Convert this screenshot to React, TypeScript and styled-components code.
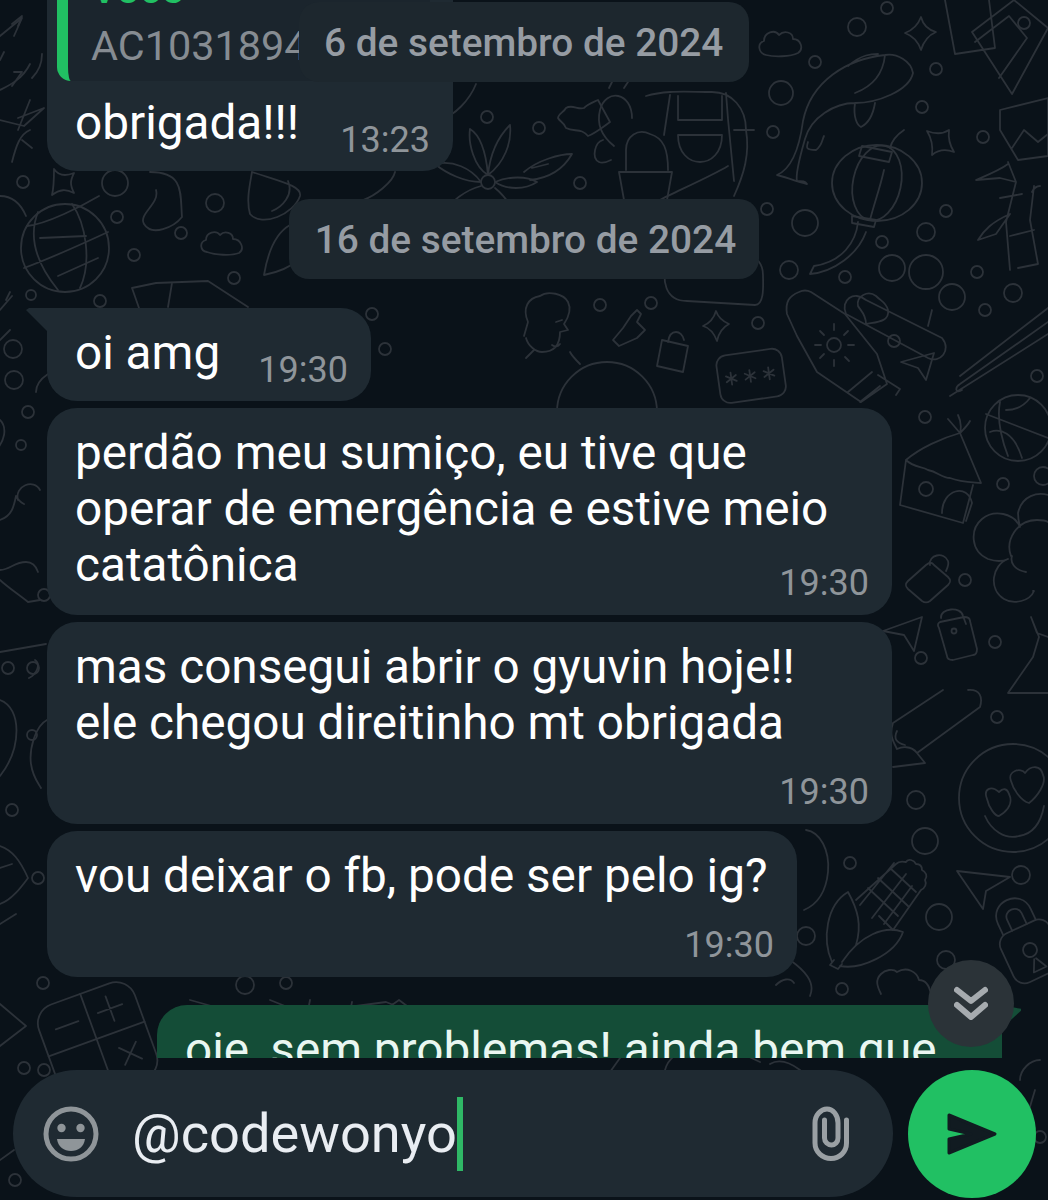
import React from "react";
import styled, { createGlobalStyle } from "styled-components";

const Global = createGlobalStyle`
  html, body { margin: 0; padding: 0; background: #0a1219; }
  * { box-sizing: border-box; }
`;

const Screen = styled.div`
  position: relative;
  width: 1048px;
  height: 1200px;
  overflow: hidden;
  display: flex;
  flex-direction: column;
  background: #0a1219;
  font-family: Roboto, "Liberation Sans", sans-serif;
`;

const WallpaperSvg = styled.svg`
  position: absolute;
  inset: 0;
  fill: none;
  stroke: #2c3239;
  stroke-width: 1.8;
  stroke-linecap: round;
  stroke-linejoin: round;
`;

const Feed = styled.div`
  position: relative;
  height: 1058px;
  overflow: hidden;
  display: flex;
  flex-direction: column;
`;

const FeedInner = styled.div`
  margin-top: -43px;
  display: flex;
  flex-direction: column;
  gap: 7px;
  flex: none;
`;

const Bubble = styled.div<{ $w: number }>`
  position: relative;
  width: ${(p) => p.$w}px;
  margin-left: 47px;
  padding: 17px 23px 10px 28px;
  background: #1f2a32;
  border-radius: 30px;
  color: #fff;
  font-size: 47.7px;
  line-height: 56px;
`;

const TailBubble = styled(Bubble)`
  border-top-left-radius: 0;
  &::before {
    content: "";
    position: absolute;
    left: -21px;
    top: 0;
    width: 22px;
    height: 24px;
    background: #1f2a32;
    clip-path: polygon(0 2px, 3px 0, 100% 0, 100% 100%);
  }
`;

const ReplyBubble = styled(Bubble)`
  padding: 10px 23px 20px 10px;
`;

const Quote = styled.div`
  height: 114px;
  overflow: hidden;
  background: #1b252d;
  border-left: 11px solid #21c063;
  border-radius: 14px;
  border-top-left-radius: 0;
  padding: 0 0 0 23px;
  margin-bottom: 14px;
`;

const QuoteAuthor = styled.div`
  color: #21c063;
  font-size: 41px;
  font-weight: 500;
  line-height: 44px;
  margin-top: 0;
`;

const QuoteText = styled.div`
  color: #868c92;
  font-size: 41.4px;
  line-height: 44px;
  margin-top: 13px;
  white-space: nowrap;
`;

const InlineRow = styled.div<{ $pad?: number }>`
  display: flex;
  align-items: flex-end;
  justify-content: space-between;
  padding-left: ${(p) => p.$pad ?? 0}px;
`;

const Time = styled.div<{ $top?: number; $drop?: number }>`
  font-size: 36px;
  line-height: 44px;
  color: #8f959a;
  text-align: right;
  margin-top: ${(p) => p.$top ?? 0}px;
  margin-bottom: ${(p) => -(p.$drop ?? 0)}px;
  white-space: nowrap;
`;

const Line = styled.div`
  white-space: nowrap;
`;

const InlineBubble = styled(TailBubble)`
  padding-bottom: 20px;
`;

const DateChip = styled.div`
  align-self: center;
  height: 80px;
  padding: 0 23px 0 26px;
  display: flex;
  align-items: center;
  background: #1d272e;
  border-radius: 20px;
  color: #969ca3;
  font-size: 38.8px;
  font-weight: 500;
  white-space: nowrap;
`;

const DateInFlow = styled(DateChip)`
  margin: 21px 0 22px;
`;

const StickyDate = styled(DateChip)`
  position: absolute;
  top: 2px;
  left: 299px;
  z-index: 3;
  padding: 0 26px 0 25px;
`;

const OutBubble = styled.div`
  position: relative;
  width: 845px;
  margin: 21px 0 0 157px;
  height: 120px;
  padding: 17px 28px;
  background: #144d37;
  border-radius: 30px;
  border-top-right-radius: 0;
  color: #e9f7f1;
  font-size: 47.7px;
  line-height: 56px;
  white-space: nowrap;
  &::after {
    content: "";
    position: absolute;
    right: -19px;
    top: 0;
    width: 20px;
    height: 24px;
    background: #144d37;
    clip-path: polygon(0 0, 100% 16%, 100% 24%, 0 100%);
  }
`;

const ScrollButton = styled.button`
  position: absolute;
  left: 928px;
  top: 960px;
  z-index: 4;
  width: 86px;
  height: 87px;
  border: 0;
  padding: 0;
  border-radius: 50%;
  background: #2b3338;
  display: flex;
  align-items: center;
  justify-content: center;
`;

const Footer = styled.div`
  position: relative;
  display: flex;
  gap: 15px;
  padding: 12px 12px 0 13px;
`;

const InputBar = styled.div`
  flex: none;
  width: 880px;
  height: 127px;
  padding: 0 44px 0 30px;
  border-radius: 64px;
  background: #1f2a32;
  display: flex;
  align-items: center;
`;

const Typed = styled.div`
  flex: 1;
  margin-left: 33px;
  display: flex;
  align-items: center;
  color: #e9edf2;
  font-size: 54.2px;
  line-height: 56px;
`;

const Caret = styled.span`
  display: inline-block;
  width: 6px;
  height: 74px;
  background: #2fb866;
`;

const SendButton = styled.button`
  flex: none;
  width: 128px;
  height: 128px;
  border: 0;
  padding: 0;
  border-radius: 50%;
  background: #21c063;
  display: flex;
  align-items: center;
  justify-content: center;
`;

const Wallpaper = () => {
  const small: [number, number, number][] = [
    [857, 27, 9], [815, 62, 6], [781, 93, 12], [936, 69, 6], [887, 8, 6], [922, 107, 6], [773, 132, 6],
    [767, 209, 6], [805, 223, 13], [946, 211, 6], [926, 232, 9], [882, 242, 6], [789, 270, 9], [845, 277, 6],
    [892, 268, 13], [926, 272, 17], [952, 297, 13], [1013, 293, 9], [977, 272, 6], [985, 310, 6], [983, 137, 6],
    [1024, 23, 6], [894, 341, 6], [758, 323, 6], [651, 303, 6], [600, 305, 6], [1037, 376, 6], [580, 183, 6],
    [539, 128, 6], [215, 203, 9], [115, 183, 13], [23, 182, 6], [117, 217, 6], [181, 233, 6], [134, 255, 6],
    [234, 278, 6], [487, 117, 6], [925, 417, 6], [1003, 484, 6], [965, 580, 6], [995, 642, 6], [921, 658, 6],
    [997, 717, 6], [916, 800, 9], [925, 841, 13], [850, 863, 6], [1021, 875, 9], [939, 917, 13], [946, 960, 9],
    [842, 989, 6], [806, 936, 9], [31, 295, 5], [100, 301, 6], [13, 349, 9], [28, 412, 6], [21, 445, 5],
    [14, 380, 9], [44, 595, 6], [33, 668, 6], [8, 668, 6], [32, 735, 5], [12, 810, 6], [38, 878, 6],
    [44, 1070, 6], [24, 1068, 6], [15, 1180, 6], [43, 983, 6], [245, 985, 9], [286, 983, 6], [1040, 1137, 6],
    [1043, 476, 9], [372, 314, 6], [385, 349, 6],
  ];
  return (
    <WallpaperSvg width="1048" height="1200" viewBox="0 0 1048 1200" aria-hidden="true">
      {small.map(([x, y, r], i) => (
        <circle key={i} cx={x} cy={y} r={r} />
      ))}
      {/* globe */}
      <circle cx="65" cy="248" r="44" />
      <path d="M27 226c20-2 55-20 72-30M24 268c22-8 58-24 84-36M38 212c-8 20-6 46 20 78M72 204c14 20 20 58 8 84M40 238l46-2M58 276l40-18" />
      {/* small clouds */}
      <path d="M207 252c-7-1-8-10-1-12 0-8 10-10 14-5 5-5 13-2 13 4 8 0 12 10 6 14-8 3-24 2-32-1z" />
      <path d="M766 55c-8-2-9-12-2-14 0-9 11-12 15-6 5-5 14-3 14 4 8 0 11 10 5 14-8 4-24 4-32 2z" />
      {/* stars */}
      <path d="M54 169c4 6 10 8 20 4-4 8-4 12 0 20-8-4-14-4-22 2 2-8 2-18 2-26z" />
      <path d="M921 17c2 8 8 13 15 15-7 3-12 8-15 18-3-9-8-14-16-17 8-3 13-8 16-16z" />
      <path d="M927 131c8 3 16 3 22-1-1 8 0 14 5 22-8-3-16-2-22 3 1-8 0-16-5-24z" />
      <path d="M716 311c2 6 6 10 13 13-6 3-10 8-12 17-3-8-7-13-14-15 7-3 11-8 13-15z" />
      {/* flower */}
      <circle cx="488" cy="182" r="7" />
      <path d="M488 175c-14-8-20-32-18-46 10 6 16 24 18 46zM488 175c2-20 10-38 22-50 2 18-6 38-22 50zM481 182c-16 0-34-8-46-18 18-4 36 4 46 18zM495 182c14-6 32-6 42 0-12 8-30 8-42 0zM481 186c-16 4-30 16-38 26M495 188c10 8 16 18 20 26" />
      {/* socks shapes */}
      <path d="M150 172c35 0 30 22 32 45-8 10-30 20-38 7-6-10 16-20 12-34M252 172c30 10 50 14 48 24-6 18-38 32-50 18-4-14 0-30 2-42M288 181c6 14-6 26-16 30" />
      <path d="M360 200c-14 6-30 12-40 24M395 172c-2 10-20 24-32 28M132 288l24-5 52-2 40 26M132 288l7 20M172 283l-4 24" />
      <path d="M290 225c-14 8-22 26-26 50 10-2 24-6 32-14" />
      {/* cactus man */}
      <path d="M626 170v-20c0-14 12-22 24-16 14 4 18 16 18 36M619 172h53l-5 28h-43zM632 118c0-26-26-30-32-8-4 16 4 28 14 36M609 88l3-6M624 88l4-6M603 140c-8 2-12 18-4 22 4 2 8 0 12-2" />
      <path d="M646 96c20-6 40-4 66-4 20 0 34 16 34 38 4 24-2 44-12 66M670 95l-6 40M726 93l2 26 6 62M678 96v24h44V96M678 135c0 36 44 36 44 0zM660 200c10-6 48-22 68-34M734 130h20" />
      {/* puzzle */}
      <path d="M566 108c6-4 12 2 18 0 4-4 10-6 14-8l12 22c-8 6-16 12-22 14-6-8-14-4-22-8-2-6-6-6-8-10 0-4 6-6 8-10z" />
      <path d="M524 172c14-12 36-18 48-18-8 14-22 24-42 26M532 168l16-4" />
      {/* fish */}
      <path d="M777 175c14-6 22-24 26-54 8-40 44-62 82-66 12-2 26 6 28 18-4 18-36 30-58 30-20 0-44 14-50 36-4 14-10 34-8 42 6 0 8 0 10 3-10-2-24-8-30-9zM848 66c14-12 24-12 30-12M885 55c-2 20-14 32-30 38M855 103c-2 14 2 22 6 24 8-4 12-12 14-24M808 142c-2 6-2 8 8 8 6-4 6-10 8-14" />
      {/* lantern */}
      <ellipse cx="877" cy="183" rx="45" ry="38" />
      <ellipse cx="877" cy="183" rx="24" ry="38" transform="rotate(12 877 183)" />
      <path d="M862 146l30 6-3 10-30-6zM890 148c2-8 8-14 14-18M852 216l24 4-2 7-22-4zM858 222c-2 20-16 40-44 44l-4 8c24-2 48-20 56-42M884 170c-4 18-10 34-14 50" />
      {/* polaroids, bamboo */}
      <path d="M945 0l10 54 40-6-6-48M972 32l42-32 34 28-36 66zM975 42l34-26 18 22-28 40M1000 110l48-12v58l-30 4-18-30zM1012 148l12-18 14 12 10-8" />
      <path d="M1008 162l8 20-10 40 4 48M1016 182l-16-4-24 2c14-6 24-10 32-16M1010 214l-14 20-18 6c6-10 14-18 32-26M1034 186l-4 34 8 44-20 4M1040 186c-4 0-6 2-8 6M1000 198l22-4M1010 236l24-6" />
      {/* hair man */}
      <path d="M528 322c-6-14 0-24 12-26 8-6 24-2 28 6 4 8 0 16-4 22l4 6-8 2c0 14-6 20-18 20-6 0-14-6-16-14M534 350l-8 8M570 352c2 4 6 8 10 12M552 345c3 2 6 2 8-1M556 322l6-2M528 322l-4 14" />
      <circle cx="607" cy="412" r="50" />
      {/* lock + chips */}
      <path d="M662 340l26 6-5 26-26-6zM668 342c2-14 14-12 16-2M623 328l8-12 6-6 4 4-4 8 8 8-8 8-18 8-6-6z" />
      <path d="M667 257c-6 24-2 44 20 44l68 4c10 0 8-22 8-30 0-10-6-20-16-18" />
      <g transform="rotate(-8 750 375)">
        <rect x="718" y="352" width="66" height="48" rx="10" />
        <path d="M731 370v12M726 373l10 6M726 379l10-6M750 370v12M745 373l10 6M745 379l10-6M769 370v12M764 373l10 6M764 379l10-6" />
      </g>
      {/* sunscreen */}
      <path d="M787 314c-2-12 2-18 12-22 4-2 8-2 12 0l34 22 32 40 10 30-26 18-44-30-20-36zM848 392l24-20M860 402l20-16M878 375l22 14-4 6" />
      <circle cx="834" cy="345" r="7" />
      <path d="M834 324v6M834 360v6M815 345h6M848 345h6M820 331l4 4M845 357l4 4M848 331l-4 4M820 358l4-4" />
      <path d="M901 362l33-9-8 27-8-12z" />
      {/* sausage hearts */}
      <path d="M866 300c-12-10-26 0-20 14l82 44c12 6 24-8 14-20zM876 296c-8-6-20 0-18 10 2 4 8 8 8 18 10-2 24-2 22-14-2-8-6-8-12-14zM932 310l-4 16" />
      {/* chopsticks */}
      <path d="M960 376l88-68M1048 322l-88 62c-6 4-4 10 2 6M950 396l98-62" />
      {/* house */}
      <path d="M900 505l6-45c14-12 36-22 54-27l21 50M900 505l63 18 10-38M906 460c8 8 16 6 22 10 10 2 14 8 22 8 10 4 18 4 31 5M960 433l-12-14M960 433c2-8 0-14-2-18M960 433c4-4 8-8 10-12" />
      <circle cx="926" cy="489" r="7" />
      <path d="M942 513c0-24 26-30 30-10l-6 18" />
      {/* basketball */}
      <circle cx="1018" cy="428" r="33" />
      <path d="M986 414l62 24M1000 402c-4 20 4 44 8 54M1030 398c-6 8-14 12-24 12M990 432c10-4 24 0 32 26" />
      {/* tree blob */}
      <path d="M1048 495c-10-3-26 0-30 18 0 6 1 10 2 14-6-14-26-18-38-8-12 10-12 32 6 40 6 2 14 3 20 0-16 6-20 30-4 40 10 6 26 2 30-8l-1 0M1011 556c-6-16 6-36 26-36 4 0 8 0 11 2M1026 572c-12-2-16-10-14-16" />
      <path d="M1031 617l8 20-6 20-25 36h40M1031 617l6 16 11 4" />
      {/* locks */}
      <path d="M908 581l18-16c4-3 6-3 8 0l14 12c3 3 3 5 0 8l-18 16c-3 2-5 2-8 0l-14-12c-3-3-3-5 0-8zM930 565c-2-10 14-14 18-4 1 3 0 6-2 10" />
      <path d="M941 618c-1-10 20-12 22-2l3 8M940 622l24-5c4 0 6 2 6 4l7 28c0 4-2 6-4 6l-20 5c-4 0-6-2-6-4l-8-28c-2-3-1-5 1-6z" />
      <circle cx="954" cy="631" r="2.500" />
      <path d="M883 631l39-14-8 34-10-16z" />
      {/* pencil */}
      <path d="M893 723l50-33M917 753l63-46c3-10 0-18-12-17M893 723c-4 12 0 18 4 26 4-2 14-4 20 4l8 10-32 4" />
      <path d="M905 745c-8-2-12-6-8-14" />
      {/* smiley */}
      <circle cx="1013" cy="798" r="54" />
      <path d="M987 799c-4-10 4-14 12-7 4-4 8-4 10 2 4 8 0 16-10 22-4 0-10-8-12-17zM1011 781c-4-10 10-14 14-8 6-8 16-8 18 2 4 8-6 22-14 28-8-2-16-14-18-22zM985 816c6 14 20 24 34 20 14-2 22-14 25-30" />
      {/* corn */}
      <path d="M832 962c-10-22-6-57 16-70 10 18 14 33 8 53M840 966c20 4 55-11 63-34-18-7-43 3-61 30M834 960l-4 5 8 4 4-5" />
      <path d="M856 900l40-36c4-4 8-2 10-2 2-4 8-2 10 2 4 0 6 2 6 6 4 2 6 6 3 10 2 4 0 8-4 10l-28 40-14-14M868 888l30 28M878 878l30 28M890 868l26 24M872 918l34-44M860 905l34-42M884 924l28-38" />
      <path d="M957 871l53 6-24 14-3 18z" />
      {/* padlock */}
      <g transform="rotate(-25 1030 950)">
        <rect x="1004" y="925" width="54" height="54" rx="12" />
        <path d="M1012 925v-12c0-24 36-24 36 0v12M1022 925v-12c0-10 16-10 16 0v12M1030 960l-6 12h14l-6-12" />
        <circle cx="1030" cy="950" r="7" />
      </g>
      {/* cookie circle and cloud */}
      <path d="M806 830c14 2 24 20 22 42-2 20-10 32-24 38M881 994c-4-8-6-14 0-20 4-4 12-6 16-2 10-6 20 0 22 8 6 0 10 4 12 14" />
      <path d="M790 960c14 10 26 22 20 36M755 972c6-6 14-8 18-4M776 985c6-6 14-8 18-2" />
      {/* left-side shapes */}
      <path d="M0 520c12-4 14-14 16-24 2 4 4 6 8 8M18 500c-4-14 16-22 22-10M0 570c10 0 14-8 26-8 6 0 10 4 12 10M0 580c6 6 18 14 28 22l12-2M0 652l46-8M35 660c6 4 2 14-6 18M0 700c22 8 22 48 0 76M47 720c-12 6-18 30-16 44 2 14 8 20 10 24M0 846c12 4 20 14 28 32-6 8-16 22-28 26M0 924l16-10M0 868l12-4M36 392c0-8 6-14 12-18M0 420c8 8 4 22-4 30M0 340l10-10M0 310l12-14M10 292l-4 8M0 120l24 6 20-18-26 10M0 36l22-18-8 18M12 86l10-14-8 0M30 100l-12 30M0 196c12 0 20 6 26 20M22 140l10 8" />
      {/* calculator */}
      <g transform="rotate(-20 93 1035)">
        <rect x="44" y="992" width="102" height="102" rx="20" />
        <path d="M95 992v102M44 1040h102M60 1017h24M118 1003v26M105 1016h26M113 1056l18 18M131 1056l-18 18" />
      </g>
      <path d="M0 1004l26 22-26 20M0 1160l14-10M42 1160l-10 16M190 1000l50 14 40 18M195 1008l-3 14M270 1000l30 12 56-6 30-4 30 12 40 6M385 1010l14-10 16 12M310 1000l-8 42M352 1002l-6 30M420 1010c18 4 36 20 50 40" />
      <path d="M1035 1090l-6 20-20-6M1040 1060c-10 0-20 10-20 20M800 1070c-8-6-20-12-30-6M760 1062l-30-14M680 1052c-14 8-18 20-14 30M620 1058l-10 14" />
      <path d="M0 90c8-4 22-10 30-26M32 78c6-6 10-14 10-24M0 60l4-8M12 24l10-8-4 10M30 130c-10 4-14 16-18 32M476 84c-8 20-24 30-24 30" />
    </WallpaperSvg>
  );
};

const DoubleChevron = () => (
  <svg width="34" height="36" viewBox="0 0 34 36" fill="none" stroke="#a6abaf" strokeWidth="6" strokeLinecap="round" strokeLinejoin="round">
    <path d="M3 4l14 11L31 4" />
    <path d="M3 19l14 12L31 19" />
  </svg>
);

const Smiley = () => (
  <svg width="56" height="56" viewBox="0 0 56 56" style={{ flex: "none" }}>
    <circle cx="28" cy="28" r="25" fill="none" stroke="#8f9599" strokeWidth="5" />
    <circle cx="18.500" cy="22" r="4.200" fill="#8f9599" />
    <circle cx="37.500" cy="22" r="4.200" fill="#8f9599" />
    <path d="M14 33h28c-1 8-7 12-14 12s-13-4-14-12z" fill="#8f9599" />
  </svg>
);

const Clip = () => (
  <svg width="37" height="55" viewBox="11 10 37 55" fill="none" stroke="#9aa0a4" strokeWidth="5" strokeLinecap="round" style={{ flex: "none" }}>
    <path d="M45.500 24V47c0 9-7 15.500-15.500 15.500S14 56 14 47V27c0-8 6-14 12-14s11 6 11 14V42c0 4-3 7-6.500 7s-7-3-7-7V24" />
  </svg>
);

const Send = () => (
  <svg width="50" height="42" viewBox="0 0 50 42" fill="#111b21" stroke="#111b21" strokeWidth="3" strokeLinejoin="round">
    <path d="M2 2l46 19L2 40V26l22-5L2 16z" />
  </svg>
);

export default function App() {
  return (
    <Screen>
      <Global />
      <Wallpaper />
      <Feed>
        <FeedInner>
          <ReplyBubble $w={406}>
            <Quote>
              <QuoteAuthor>Você</QuoteAuthor>
              <QuoteText>AC1031894</QuoteText>
            </Quote>
            <InlineRow $pad={18}>
              <Line>obrigada!!!</Line>
              <Time $drop={11}>13:23</Time>
            </InlineRow>
          </ReplyBubble>
          <DateInFlow>16 de setembro de 2024</DateInFlow>
          <InlineBubble $w={324}>
            <InlineRow>
              <Line>oi amg</Line>
              <Time $drop={11}>19:30</Time>
            </InlineRow>
          </InlineBubble>
          <Bubble $w={845}>
            <Line>perdão meu sumiço, eu tive que</Line>
            <Line>operar de emergência e estive meio</Line>
            <Line>catatônica</Line>
            <Time $top={-32}>19:30</Time>
          </Bubble>
          <Bubble $w={845}>
            <Line>mas consegui abrir o gyuvin hoje!!</Line>
            <Line>ele chegou direitinho mt obrigada</Line>
            <Time $top={19}>19:30</Time>
          </Bubble>
          <Bubble $w={750}>
            <Line>vou deixar o fb, pode ser pelo ig?</Line>
            <Time $top={19}>19:30</Time>
          </Bubble>
          <OutBubble>oie, sem problemas! ainda bem que</OutBubble>
        </FeedInner>
      </Feed>
      <StickyDate>6 de setembro de 2024</StickyDate>
      <ScrollButton aria-label="Rolar para o fim">
        <DoubleChevron />
      </ScrollButton>
      <Footer>
        <InputBar>
          <Smiley />
          <Typed>
            @codewonyo
            <Caret />
          </Typed>
          <Clip />
        </InputBar>
        <SendButton aria-label="Enviar">
          <Send />
        </SendButton>
      </Footer>
    </Screen>
  );
}
